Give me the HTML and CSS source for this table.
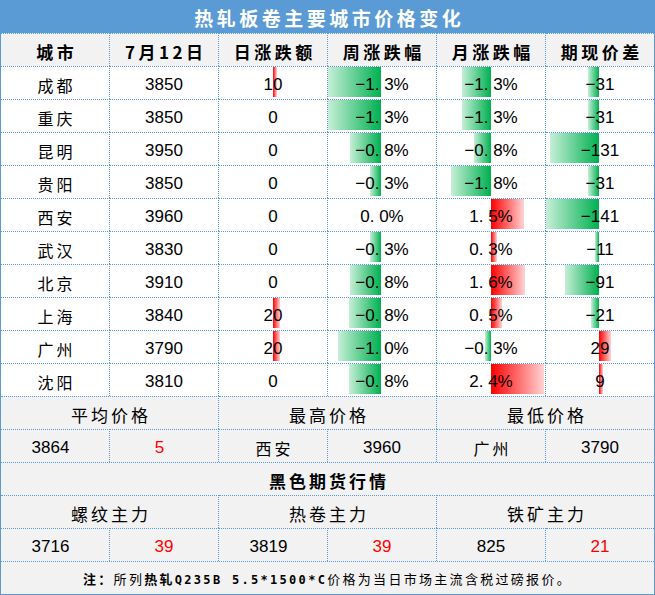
FILE: index.html
```html
<!DOCTYPE html>
<html lang="zh-CN">
<head>
<meta charset="utf-8">
<title>热轧板卷主要城市价格变化</title>
<link rel="stylesheet" href="styles.css">
</head>
<body>
<div class="sheet">
  <div class="title"><span class="tt">热轧板卷主要城市价格变化</span></div>
  <div class="grid">
    <div class="c g hd"><span class="ls">城市</span></div>
    <div class="c g hd"><span class="ls">7月12日</span></div>
    <div class="c g hd"><span class="ls">日涨跌额</span></div>
    <div class="c g hd"><span class="ls">周涨跌幅</span></div>
    <div class="c g hd"><span class="ls">月涨跌幅</span></div>
    <div class="c g hd e"><span class="ls">期现价差</span></div>

    <div class="c cn"><span class="ls">成都</span></div>
    <div class="c">3850</div>
    <div class="c d"><i class="bar pos" style="width:4px"></i><span class="v">10</span></div>
    <div class="c w"><i class="bar neg" style="width:53px"></i><span class="v">−1. 3%</span></div>
    <div class="c m"><i class="bar neg" style="width:29px"></i><span class="v">−1. 3%</span></div>
    <div class="c x e"><i class="bar neg" style="width:11px"></i><span class="v">−31</span></div>

    <div class="c cn"><span class="ls">重庆</span></div>
    <div class="c">3850</div>
    <div class="c d"><span class="v">0</span></div>
    <div class="c w"><i class="bar neg" style="width:53px"></i><span class="v">−1. 3%</span></div>
    <div class="c m"><i class="bar neg" style="width:29px"></i><span class="v">−1. 3%</span></div>
    <div class="c x e"><i class="bar neg" style="width:11px"></i><span class="v">−31</span></div>

    <div class="c cn"><span class="ls">昆明</span></div>
    <div class="c">3950</div>
    <div class="c d"><span class="v">0</span></div>
    <div class="c w"><i class="bar neg" style="width:31px"></i><span class="v">−0. 8%</span></div>
    <div class="c m"><i class="bar neg" style="width:17px"></i><span class="v">−0. 8%</span></div>
    <div class="c x e"><i class="bar neg" style="width:49px"></i><span class="v">−131</span></div>

    <div class="c cn"><span class="ls">贵阳</span></div>
    <div class="c">3850</div>
    <div class="c d"><span class="v">0</span></div>
    <div class="c w"><i class="bar neg" style="width:11px"></i><span class="v">−0. 3%</span></div>
    <div class="c m"><i class="bar neg" style="width:40px"></i><span class="v">−1. 8%</span></div>
    <div class="c x e"><i class="bar neg" style="width:11px"></i><span class="v">−31</span></div>

    <div class="c cn"><span class="ls">西安</span></div>
    <div class="c">3960</div>
    <div class="c d"><span class="v">0</span></div>
    <div class="c w"><span class="v">0. 0%</span></div>
    <div class="c m"><i class="bar pos" style="width:33px"></i><span class="v">1. 5%</span></div>
    <div class="c x e"><i class="bar neg" style="width:53px"></i><span class="v">−141</span></div>

    <div class="c cn"><span class="ls">武汉</span></div>
    <div class="c">3830</div>
    <div class="c d"><span class="v">0</span></div>
    <div class="c w"><i class="bar neg" style="width:11px"></i><span class="v">−0. 3%</span></div>
    <div class="c m"><i class="bar pos" style="width:6px"></i><span class="v">0. 3%</span></div>
    <div class="c x e"><i class="bar neg" style="width:4px"></i><span class="v">−11</span></div>

    <div class="c cn"><span class="ls">北京</span></div>
    <div class="c">3910</div>
    <div class="c d"><span class="v">0</span></div>
    <div class="c w"><i class="bar neg" style="width:31px"></i><span class="v">−0. 8%</span></div>
    <div class="c m"><i class="bar pos" style="width:34px"></i><span class="v">1. 6%</span></div>
    <div class="c x e"><i class="bar neg" style="width:34px"></i><span class="v">−91</span></div>

    <div class="c cn"><span class="ls">上海</span></div>
    <div class="c">3840</div>
    <div class="c d"><i class="bar pos" style="width:7px"></i><span class="v">20</span></div>
    <div class="c w"><i class="bar neg" style="width:32px"></i><span class="v">−0. 8%</span></div>
    <div class="c m"><i class="bar pos" style="width:11px"></i><span class="v">0. 5%</span></div>
    <div class="c x e"><i class="bar neg" style="width:8px"></i><span class="v">−21</span></div>

    <div class="c cn"><span class="ls">广州</span></div>
    <div class="c">3790</div>
    <div class="c d"><i class="bar pos" style="width:7px"></i><span class="v">20</span></div>
    <div class="c w"><i class="bar neg" style="width:43px"></i><span class="v">−1. 0%</span></div>
    <div class="c m"><i class="bar neg" style="width:6px"></i><span class="v">−0. 3%</span></div>
    <div class="c x e"><i class="bar pos" style="width:12px"></i><span class="v">29</span></div>

    <div class="c cn"><span class="ls">沈阳</span></div>
    <div class="c">3810</div>
    <div class="c d"><span class="v">0</span></div>
    <div class="c w"><i class="bar neg" style="width:32px"></i><span class="v">−0. 8%</span></div>
    <div class="c m"><i class="bar pos" style="width:53px"></i><span class="v">2. 4%</span></div>
    <div class="c x e"><i class="bar pos" style="width:4px"></i><span class="v">9</span></div>

    <div class="c g lbl s2"><span class="ls">平均价格</span></div>
    <div class="c g lbl s2"><span class="ls">最高价格</span></div>
    <div class="c g lbl s2 e"><span class="ls">最低价格</span></div>

    <div class="c g sl">3864</div>
    <div class="c g sl red">5</div>
    <div class="c g cn"><span class="ls">西安</span></div>
    <div class="c g">3960</div>
    <div class="c g cn"><span class="ls">广州</span></div>
    <div class="c g e">3790</div>

    <div class="c g sec s6 e"><span class="ls">黑色期货行情</span></div>

    <div class="c g lbl s2"><span class="ls">螺纹主力</span></div>
    <div class="c g lbl s2"><span class="ls">热卷主力</span></div>
    <div class="c g lbl s2 e"><span class="ls">铁矿主力</span></div>

    <div class="c g sl">3716</div>
    <div class="c g red">39</div>
    <div class="c g sl">3819</div>
    <div class="c g red">39</div>
    <div class="c g">825</div>
    <div class="c g e red">21</div>

    <div class="c g note s6 e"><span class="nt"><b>注：</b>所列<b>热轧<span class="mono">Q235B 5.5*1500*C</span></b>价格为当日市场主流含税过磅报价。</span></div>
  </div>
</div>
</body>
</html>
```

FILE: styles.css
```css
html, body {
  margin: 0;
  padding: 0;
  background: #ffffff;
}

.sheet {
  width: 655px;
  height: 595px;
  box-sizing: border-box;
  border: 1px solid #5b9bd5;
  border-top: 0;
  font-family: "Liberation Sans", "Noto Sans CJK SC", sans-serif;
  color: #000;
  overflow: hidden;
}

.title {
  height: 33px;
  box-sizing: border-box;
  padding-top: 3px;
  background: #5b9bd5;
  color: #fff;
  display: flex;
  align-items: center;
  justify-content: center;
  font-family: "Noto Sans CJK SC", sans-serif;
  font-weight: 700;
  font-size: 19px;
  line-height: 22px;
}

.tt {
  letter-spacing: 3.5px;
  margin-right: -3.5px;
}

.grid {
  display: grid;
  grid-template-columns: 109px 109px 109px 109px 109px 108px;
  grid-auto-rows: 33px;
}

.c {
  position: relative;
  box-sizing: border-box;
  border-top: 1px dotted #5b9bd5;
  border-right: 1px dotted #5b9bd5;
  background: #fff;
  display: flex;
  align-items: center;
  justify-content: center;
  padding-top: 3px;
  font-size: 17px;
  line-height: 20px;
  white-space: pre;
}

.c.e {
  border-right: 0;
}

.g {
  background: #f2f2f2;
}

.s2 {
  grid-column: span 2;
}

.s6 {
  grid-column: span 6;
}

.hd {
  font-family: "Noto Sans CJK SC", sans-serif;
  font-weight: 700;
  font-size: 17px;
}

.hd .ls {
  letter-spacing: 3.5px;
  margin-right: -3.5px;
}

.cn {
  font-family: "Noto Sans CJK SC", sans-serif;
  font-size: 16px;
}

.ls {
  letter-spacing: 3px;
  margin-right: -3px;
}

.lbl {
  font-family: "Noto Sans CJK SC", sans-serif;
  font-size: 17px;
}

.sec {
  font-family: "Noto Sans CJK SC", sans-serif;
  font-weight: 700;
  font-size: 17px;
}

.sl {
  padding-right: 9px;
}

.red {
  color: #ff0000;
}

.v {
  position: relative;
}

.bar {
  position: absolute;
  top: 0;
  bottom: 2px;
  display: block;
}

.neg {
  background: linear-gradient(to left, #00b050, #c6efd7);
}

.pos {
  background: linear-gradient(to right, #ff0000, #ffd3d3);
}

.d .pos {
  left: 54px;
}

.w .neg {
  right: 55px;
}

.m .neg {
  right: 54px;
}

.m .pos {
  left: 54px;
}

.x .neg {
  right: 55px;
}

.x .pos {
  left: 53px;
}

.note {
  font-family: "Noto Sans CJK SC", sans-serif;
  font-size: 13px;
}

.nt {
  letter-spacing: 2.3px;
}

.note b {
  font-weight: 700;
}

.mono {
  font-family: "DejaVu Sans Mono", monospace;
  font-size: 12px;
  letter-spacing: 2.3px;
}
```
